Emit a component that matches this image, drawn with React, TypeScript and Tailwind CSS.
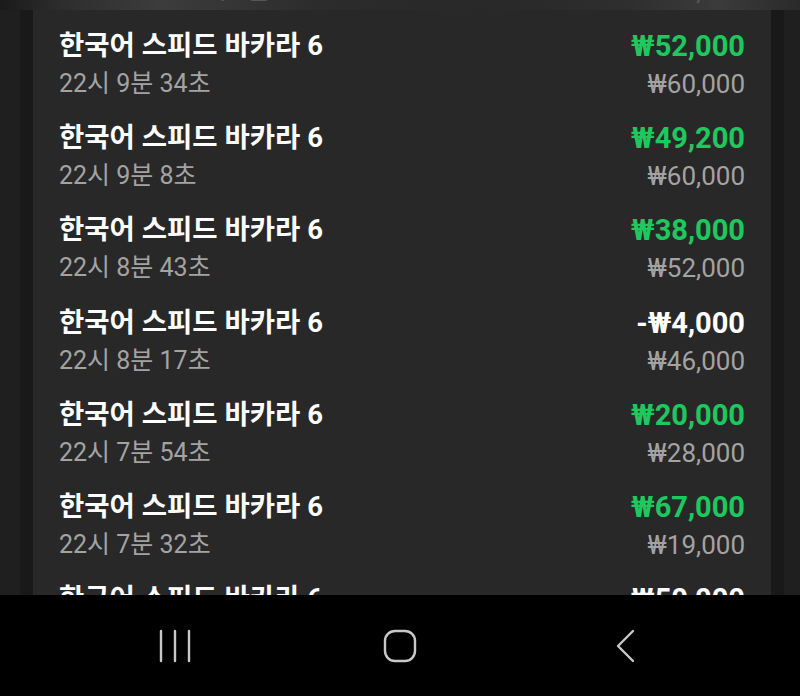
import React from "react";

type Row = { time: string; amount: string; balance: string; win: boolean };

const rows: Row[] = [
  { time: "22시 9분 34초", amount: "₩52,000", balance: "₩60,000", win: true },
  { time: "22시 9분 8초", amount: "₩49,200", balance: "₩60,000", win: true },
  { time: "22시 8분 43초", amount: "₩38,000", balance: "₩52,000", win: true },
  { time: "22시 8분 17초", amount: "-₩4,000", balance: "₩46,000", win: false },
  { time: "22시 7분 54초", amount: "₩20,000", balance: "₩28,000", win: true },
  { time: "22시 7분 32초", amount: "₩67,000", balance: "₩19,000", win: true },
  { time: "22시 7분 10초", amount: "₩50,000", balance: "₩50,000", win: false },
];

const font = { fontFamily: 'Roboto, "Noto Sans CJK KR", sans-serif' };

function HistoryRow({ r }: { r: Row }) {
  return (
    <div className="h-[92.2px] shrink-0 pl-[26px] pr-[26px] pt-[17px] flex justify-between">
      <div className="flex flex-col">
        <div className="text-[27.5px] leading-[38px] font-bold text-white whitespace-nowrap">한국어 스피드 바카라 6</div>
        <div className="text-[25px] leading-[38px] text-[#a3a3a3] whitespace-nowrap">{r.time}</div>
      </div>
      <div className="flex flex-col items-end">
        <div
          className={
            r.win
              ? "text-[29px] leading-[38px] font-bold text-[#1fc85f] whitespace-nowrap"
              : "text-[29px] leading-[38px] font-bold text-white whitespace-nowrap"
          }
        >
          {r.amount}
        </div>
        <div className="text-[26px] leading-[38px] text-[#a3a3a3] whitespace-nowrap">{r.balance}</div>
      </div>
    </div>
  );
}

export default function App() {
  return (
    <div className="w-[800px] h-[696px] overflow-hidden flex flex-col bg-[#1b1b1b]" style={font}>
      <div className="flex-1 overflow-hidden flex flex-col bg-[linear-gradient(90deg,#1f1f1f_0px,#1f1f1f_20px,#191919_20px,#191919_33px,transparent_33px,transparent_771px,#191919_771px,#191919_784px,#1f1f1f_784px)]">
        <div className="h-[10px] shrink-0 bg-[linear-gradient(90deg,#1a1a1a_0%,#2e2e2e_8%,#3c3c3c_20%,#2c2c2c_40%,#282828_60%,#2e2e2e_78%,#3b3b3b_90%,#2a2a2a_100%)] overflow-hidden relative">
          <div className="absolute left-[176px] -top-[24px] text-[25px] leading-[30px] text-[#8a8a8a] opacity-40">22시 6분 48초</div>
          <div className="absolute right-[55px] -top-[24px] text-[26px] leading-[30px] text-[#8a8a8a] opacity-40">₩50,000</div>
        </div>
        <div className="ml-[33px] w-[738px] bg-[#282828] flex-1 flex flex-col overflow-hidden">
          {rows.map((r, i) => (
            <HistoryRow key={i} r={r} />
          ))}
        </div>
      </div>
      <div className="h-[101px] shrink-0 bg-black flex justify-center items-center">
        <div className="w-[225px] flex justify-center">
          <svg width="34" height="34" viewBox="0 0 34 34" fill="none" stroke="#c8c8c8" strokeWidth="2.4" strokeLinecap="round">
            <line x1="3" y1="2" x2="3" y2="32" />
            <line x1="17" y1="2" x2="17" y2="32" />
            <line x1="31" y1="2" x2="31" y2="32" />
          </svg>
        </div>
        <div className="w-[225px] flex justify-center">
          <svg width="34" height="34" viewBox="0 0 34 34" fill="none" stroke="#c8c8c8" strokeWidth="2.4">
            <rect x="2" y="2" width="30" height="30" rx="10" />
          </svg>
        </div>
        <div className="w-[225px] flex justify-center">
          <svg width="34" height="34" viewBox="0 0 34 34" fill="none" stroke="#c8c8c8" strokeWidth="2.4" strokeLinecap="round" strokeLinejoin="round">
            <polyline points="25,2 10,17 25,32" />
          </svg>
        </div>
      </div>
    </div>
  );
}
